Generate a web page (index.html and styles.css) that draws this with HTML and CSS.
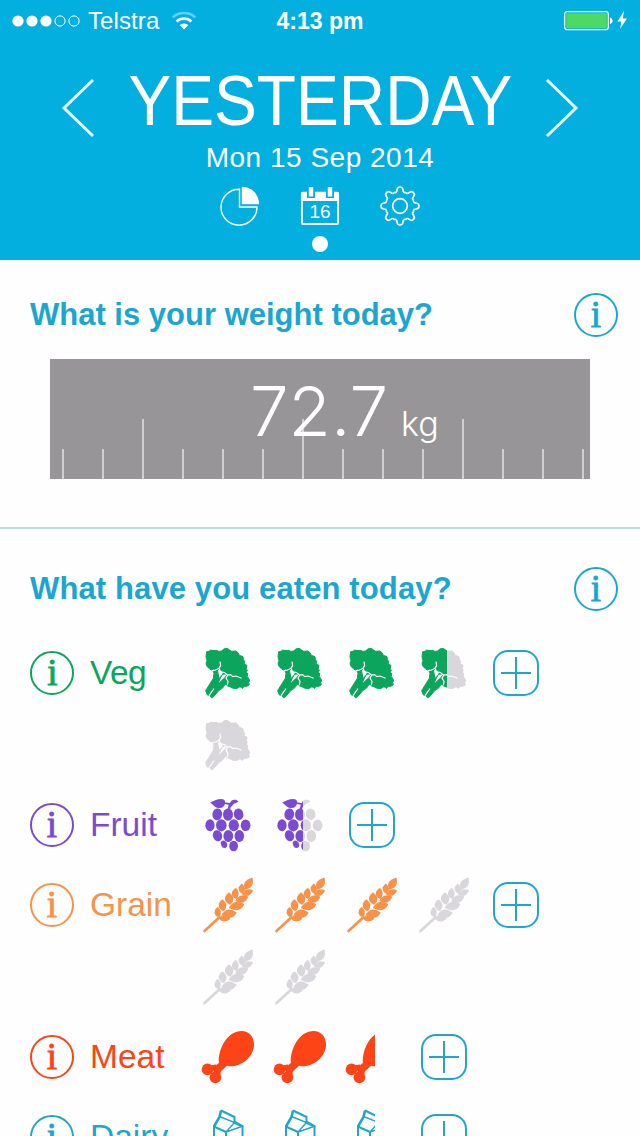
FILE: index.html
```
<!DOCTYPE html>
<html lang="en">
<head>
  <meta charset="UTF-8">
  <title>Yesterday</title>
  <link rel="stylesheet" href="styles.css">
</head>
<body>

  <!-- food icons, each on a 72x72 cell -->
  <svg class="sprite" width="0" height="0">
    <defs>
      <clipPath id="left-half"><rect x="0" y="0" width="39" height="72"/></clipPath>
      <clipPath id="right-half"><rect x="39" y="0" width="33" height="72"/></clipPath>

      <symbol id="veg" viewBox="0 0 72 72">
        <g transform="translate(-2 3) scale(.3333)">
          <path fill="currentColor" stroke="currentColor" stroke-width="3" stroke-linejoin="round" d="M48 50L50 35L57 34L62 30L69 32L80 31L86 34L96 33L101 27L112 25L117 29L125 34L138 33L144 38L148 46L159 50L160 58L164 65L162 72L171 76L169 86L172 92L168 97L173 100L172 110L179 120L176 128L178 134L171 139L162 139L158 145L150 140L140 146L126 144L120 140L113 138L107 133L103 137L97 145L87 151L70 171L64 173L60 167L52 165L47 152L70 115L72 100L68 91L60 88L52 80L48 72L51 62z"/>
          <path class="gap" d="M90 65L92 76L87 85L77 90L66 92"/>
          <path class="gap" d="M87 85L92 95L104 98L112 105L122 104L128 110L138 108L155 115"/>
          <path class="gap" d="M114 105L108 114L114 124L112 136"/>
          <path class="gap" d="M72 146L57 167"/>
          <path class="cut" d="M84 90L93 93L98 101L88 113zM98 105L110 103L104 112L86 129L94 112z"/>
        </g>
      </symbol>

      <symbol id="fruit" viewBox="0 0 72 72">
        <g fill="currentColor">
          <path d="M18 13.400c4-1.700 10.500-5.200 14.500-2.500l.8 2.500 4.700.5c.6-2.500 3.500-4 6.500-2.800l2 1.700-4.500 1.900-3.500 3.700-.8 3.500H35l1.800-6.200-3.800-.8c-1.300 3.600-3.700 4.500-7.500 3.800-3.600-.8-4.200-3.700-7.500-5.300z"/>
          <ellipse cx="25.300" cy="25.300" rx="4.900" ry="5.900" transform="rotate(8 25.300 25.300)"/>
          <ellipse cx="36" cy="25.600" rx="5" ry="6.100"/>
          <ellipse cx="46.600" cy="25.300" rx="4.800" ry="5.800" transform="rotate(-12 46.600 25.300)"/>
          <ellipse cx="18" cy="36.300" rx="4.600" ry="6"/>
          <ellipse cx="29.300" cy="36.300" rx="5.300" ry="6.100"/>
          <ellipse cx="41.800" cy="36.300" rx="5.100" ry="6"/>
          <ellipse cx="53.600" cy="36.300" rx="4.900" ry="5.800"/>
          <ellipse cx="25.500" cy="46.700" rx="4.600" ry="5.600" transform="rotate(-18 25.500 46.700)"/>
          <ellipse cx="36.300" cy="47" rx="4.900" ry="6"/>
          <ellipse cx="47.300" cy="47" rx="4.800" ry="5.900"/>
          <ellipse cx="32" cy="55.300" rx="3" ry="3.800" transform="rotate(-25 32 55.300)"/>
          <ellipse cx="41.600" cy="57" rx="4.400" ry="5.200"/>
        </g>
      </symbol>

      <symbol id="grain" viewBox="0 0 72 72">
        <g transform="translate(0 -2.700)">
          <path fill="none" stroke="currentColor" stroke-width="2.600" stroke-linecap="round" d="M12.500 64.700L27 51.500"/>
          <g fill="currentColor" stroke="currentColor" stroke-width="1.700" stroke-linejoin="round">
            <path d="M60 12.300c.8 5.500-.3 9.200-6.800 10.300-1.400-5.400 1.400-8.900 6.800-10.300z"/>
            <path d="M49.800 18.300c2.500 2.500 2.900 5.300.9 8.500-4.300-2.300-4.200-5.700-.9-8.500z"/>
            <path d="M43.800 22.600c2.900 3.400 3 6 .3 9.200-4.700-2.500-4.600-6.200-.3-9.200z"/>
            <path d="M37 27c4.300 3.500 4.700 7 1 10.500-5.500-2.500-5.600-6.800-1-10.500z"/>
            <path d="M30.300 34c4 3 4.300 6.300 1.300 10-5-2.600-5.400-6.500-1.300-10z"/>
            <path d="M25.600 41.500c2.800 2.700 3.300 5.400 1 8.900-4.200-2.300-4.200-5.700-1-8.900z"/>
            <path d="M60 24.300c-1.800 4.200-4.600 5.200-8.800 4 1.500-4.200 4.500-5.200 8.800-4z"/>
            <path d="M55.300 30.800c-2.200 4.900-6 6-11 3.600 2.700-4.600 6.300-5.500 11-3.600z"/>
            <path d="M51.300 38.100c-2.500 5.300-7.300 6.300-13.500 3.200 3.600-5.400 8.300-6.200 13.500-3.200z"/>
            <path d="M43.600 46.700c-3.300 5-7.300 5.200-12.800 1.400 3.800-5 8-5.200 12.800-1.400z"/>
            <path d="M37.300 52.200c-3.300 3-6.800 2.800-9.800-.4 3.500-3.700 7-3.400 9.800.4z"/>
          </g>
        </g>
      </symbol>

      <symbol id="meat" viewBox="0 0 72 72">
        <g fill="currentColor" transform="translate(0 -.6)">
          <path d="M26.700 41C27 25 37 10.500 49.500 10.500c7.500 0 12.500 5.500 12.500 13.500C62 36 50 46.500 37.500 45.800l-2.500-.4-7.500 7-5.500-5.500 5-4.500z"/>
          <circle cx="15.500" cy="49" r="5.800"/>
          <circle cx="23.400" cy="57" r="5.800"/>
          <path d="M16 45l8-1 5 5-1 9z"/>
        </g>
      </symbol>

      <symbol id="dairy" viewBox="0 0 72 72">
        <g fill="none" stroke="currentColor" stroke-width="2">
          <path d="M29 9.500l13.500 6.500v4.500l8 4.500V62H34V31L22 25.500V57l12 5"/>
          <path d="M29 9.500l-1.500 6.500L22 25.500" stroke-width="2.600"/>
          <path d="M27.500 15.500l15 6L34 31M34 31l16-5.500-9-4" stroke-width="1.400"/>
        </g>
      </symbol>

      <symbol id="plus" viewBox="0 0 72 72">
        <rect x="14" y="14" width="44" height="44" rx="14" fill="none" stroke="#20a5cc" stroke-width="2"/>
        <path d="M36 20v32M21 36h30" fill="none" stroke="#20a5cc" stroke-width="2"/>
      </symbol>

      <path id="tooth" d="M-5.800-13.900C-4.200-12.800-3.200-14-3-16C-2.700-18.500-1.800-19 0-19C1.800-19 2.700-18.500 3-16C3.200-14 4.200-12.800 5.800-13.900"/>
    </defs>
  </svg>

  <header class="header">
    <div class="status">
      <div class="carrier">
        <svg width="68" height="14" viewBox="0 0 68 14">
          <g fill="#fff"><circle cx="6" cy="7" r="5.600"/><circle cx="20" cy="7" r="5.600"/><circle cx="34" cy="7" r="5.600"/></g>
          <g fill="none" stroke="#fff"><circle cx="48" cy="7" r="5.100"/><circle cx="62" cy="7" r="5.100"/></g>
        </svg>
        <span class="network">Telstra</span>
        <svg width="24" height="18" viewBox="0 0 24 18">
          <path d="M.8 5.300a16.500 16.500 0 0 1 22.400 0" fill="none" stroke="#5fd0f7" stroke-width="2.600"/>
          <path d="M4.500 9.500a11 11 0 0 1 15 0" fill="none" stroke="#fff" stroke-width="2.600"/>
          <path d="M12 17.500l-4.300-4.400a6.300 6.300 0 0 1 8.600 0z" fill="#fff"/>
        </svg>
      </div>
      <div class="time">4:13 pm</div>
      <div class="battery">
        <svg width="66" height="22" viewBox="0 0 66 22">
          <rect x=".7" y="1.700" width="43.600" height="18" rx="2.500" fill="none" stroke="#fff" stroke-width="1.200"/>
          <rect x="2.200" y="3.200" width="40.600" height="15" rx="1" fill="#4cd964"/>
          <path d="M46 7.500c3.500.5 3.500 6 0 6.500z" fill="#fff"/>
          <path d="M60 1l-6.500 10.500h4l-1.500 7.500 7-10.500h-4.200z" fill="#fff"/>
        </svg>
      </div>
    </div>

    <div class="day">
      <svg class="arrow" width="34" height="60" viewBox="0 0 34 60"><path d="M32 2L3 30l29 28"/></svg>
      <h1 class="day-name">YESTERDAY</h1>
      <svg class="arrow" width="34" height="60" viewBox="0 0 34 60"><path d="M2 2l29 28L2 58"/></svg>
    </div>
    <div class="date">Mon 15 Sep 2014</div>

    <nav class="tabs">
      <svg width="40" height="40" viewBox="0 0 40 40">
        <path d="M19.500 3.200A18 18 0 1 0 37 21H19.500z" fill="none" stroke="#fff" stroke-width="1.400"/>
        <path d="M21.800 0.800a17 17 0 0 1 17.200 17.400H21.800z" fill="#fff"/>
      </svg>
      <svg width="40" height="40" viewBox="0 0 40 40">
        <rect x="1.900" y="6.700" width="36.200" height="31.300" rx="1" fill="none" stroke="#fff" stroke-width="1.900"/>
        <path d="M1.500 6h37v9h-37z" fill="#fff"/>
        <path d="M7 4h8v8H7zM26 4h8v8h-8z" fill="#02afdf"/>
        <path d="M8.800 1h4.400v9.500H8.800zM27.800 1h4.400v9.500h-4.400z" fill="#fff"/>
        <text x="20" y="32" class="tab-day">16</text>
      </svg>
      <svg width="40" height="40" viewBox="0 0 40 40">
        <g fill="none" stroke="#fff" stroke-width="1.700" transform="translate(20 20)">
          <circle r="7.300"/>
          <use href="#tooth"/>
          <use href="#tooth" transform="rotate(45)"/>
          <use href="#tooth" transform="rotate(90)"/>
          <use href="#tooth" transform="rotate(135)"/>
          <use href="#tooth" transform="rotate(180)"/>
          <use href="#tooth" transform="rotate(225)"/>
          <use href="#tooth" transform="rotate(270)"/>
          <use href="#tooth" transform="rotate(315)"/>
        </g>
      </svg>
    </nav>
    <div class="dot"></div>
  </header>

  <section class="weight">
    <div class="question">
      <h2>What is your weight today?</h2>
      <span class="info">i</span>
    </div>
    <div class="scale">
      <div class="ticks">
        <i></i><i></i><i class="tall"></i><i></i><i></i><i></i><i class="tall"></i><i></i><i></i><i></i><i class="tall"></i><i></i><i></i><i></i>
      </div>
      <div class="reading"><span class="number">72.7</span><span class="unit">kg</span></div>
    </div>
  </section>

  <section class="eaten">
    <div class="question">
      <h2>What have you eaten today?</h2>
      <span class="info">i</span>
    </div>

    <div class="food veg">
      <div class="label"><span class="info">i</span>Veg</div>
      <div class="serves">
        <svg><use href="#veg"/></svg>
        <svg><use href="#veg"/></svg>
        <svg><use href="#veg"/></svg>
        <svg><g clip-path="url(#left-half)"><use href="#veg"/></g><g class="empty" clip-path="url(#right-half)"><use href="#veg"/></g></svg>
        <svg><use href="#plus"/></svg>
        <svg class="empty"><use href="#veg"/></svg>
      </div>
    </div>

    <div class="food fruit">
      <div class="label"><span class="info">i</span>Fruit</div>
      <div class="serves">
        <svg><use href="#fruit"/></svg>
        <svg><g clip-path="url(#left-half)"><use href="#fruit"/></g><g class="empty" clip-path="url(#right-half)"><use href="#fruit"/></g></svg>
        <svg><use href="#plus"/></svg>
      </div>
    </div>

    <div class="food grain">
      <div class="label"><span class="info">i</span>Grain</div>
      <div class="serves">
        <svg><use href="#grain"/></svg>
        <svg><use href="#grain"/></svg>
        <svg><use href="#grain"/></svg>
        <svg class="empty"><use href="#grain"/></svg>
        <svg><use href="#plus"/></svg>
        <svg class="empty"><use href="#grain"/></svg>
        <svg class="empty"><use href="#grain"/></svg>
      </div>
    </div>

    <div class="food meat">
      <div class="label"><span class="info">i</span>Meat</div>
      <div class="serves">
        <svg><use href="#meat"/></svg>
        <svg><use href="#meat"/></svg>
        <svg><g clip-path="url(#left-half)"><use href="#meat"/></g></svg>
        <svg><use href="#plus"/></svg>
      </div>
    </div>

    <div class="food dairy">
      <div class="label"><span class="info">i</span>Dairy</div>
      <div class="serves">
        <svg><use href="#dairy"/></svg>
        <svg><use href="#dairy"/></svg>
        <svg><g clip-path="url(#left-half)"><use href="#dairy"/></g></svg>
        <svg><use href="#plus"/></svg>
      </div>
    </div>
  </section>

</body>
</html>
```
FILE: styles.css
```
* {
  box-sizing: border-box;
}

html, body {
  height: 1136px;
  overflow: hidden;
}

body {
  margin: 0;
  width: 640px;
  background-color: #fefefe;
  font-family: "Liberation Sans", Arial, sans-serif;
}

svg {
  display: block;
}

.sprite {
  position: absolute;
}

/* header */

.header {
  height: 260px;
  background-color: #02afdf;
  color: white;
  display: flex;
  flex-direction: column;
  align-items: center;
}

.status {
  width: 100%;
  height: 42px;
  padding: 0 10px 0 12px;
  display: grid;
  grid-template-columns: 1fr auto 1fr;
  align-items: center;
  font-size: 23px;
}

.carrier {
  display: flex;
  align-items: center;
}

.network {
  margin: 0 13px 0 8px;
  font-size: 24px;
  letter-spacing: 0.1px;
}

.time {
  font-weight: bold;
  font-size: 23px;
  margin-right: 2px;
}

.battery {
  display: flex;
  justify-content: flex-end;
}

.day {
  width: 518px;
  height: 98px;
  display: flex;
  align-items: center;
  justify-content: space-between;
  padding-top: 34px;
}

.arrow {
  fill: none;
  stroke: #e6fdff;
  stroke-width: 3;
}

.day-name {
  margin: -14px -40px 0;
  font-size: 70px;
  line-height: 70px;
  font-weight: normal;
  transform: scaleX(0.917);
}

.date {
  font-size: 28px;
  line-height: 32px;
  letter-spacing: 0.5px;
  margin-top: 2px;
}

.tabs {
  display: flex;
  gap: 40px;
  margin-top: 12px;
}

.tab-day {
  fill: white;
  font-size: 19px;
  text-anchor: middle;
}

.dot {
  width: 16px;
  height: 16px;
  margin-top: 10px;
  border-radius: 50%;
  background-color: white;
}

/* questions */

.weight {
  height: 269px;
  padding-top: 33px;
  border-bottom: 2px solid #b3dfdc;
}

.eaten {
  padding-top: 38px;
}

.question {
  display: flex;
  align-items: center;
  justify-content: space-between;
  padding: 0 22px 0 30px;
  color: #1ba6cf;
}

h2 {
  margin: 0;
  font-size: 31px;
  line-height: 44px;
}

.eaten h2 {
  letter-spacing: 0.12px;
}

.info {
  width: 44px;
  height: 44px;
  flex: none;
  border: 2px solid currentColor;
  border-radius: 50%;
  font-family: "Liberation Serif", serif;
  font-weight: normal;
  font-size: 37px;
  line-height: 40px;
  text-align: center;
  -webkit-text-stroke: 0.9px currentColor;
}

/* weight scale */

.scale {
  position: relative;
  width: 540px;
  height: 120px;
  margin: 22px auto 0;
  background-color: #979598;
}

.ticks {
  height: 120px;
  padding-left: 12px;
  display: flex;
  align-items: flex-end;
  gap: 38px;
}

.ticks i {
  width: 2px;
  height: 30px;
  background-color: #cfced1;
}

.ticks .tall {
  height: 60px;
}

.reading {
  position: absolute;
  top: 10px;
  left: 200px;
  color: white;
  font-family: Inter, sans-serif;
  font-weight: 300;
  line-height: 84px;
  white-space: nowrap;
}

.number {
  font-size: 69px;
}

.unit {
  margin-left: 13px;
  font-size: 34px;
}

/* food rows */

.eaten .question {
  margin-bottom: 22px;
}

.food {
  display: flex;
  padding: 4px 0 4px 30px;
}

.label {
  width: 162px;
  height: 72px;
  display: flex;
  align-items: center;
  gap: 16px;
  font-size: 33.5px;
}

.serves {
  width: 360px;
  display: flex;
  flex-wrap: wrap;
}

.serves svg {
  width: 72px;
  height: 72px;
}

.gap {
  fill: none;
  stroke: #fefefe;
  stroke-width: 3.5;
}

.cut {
  fill: #fefefe;
}

.veg { color: #0ba65c; }
.veg .label { letter-spacing: -0.6px; }
.fruit { color: #7a4bd0; }
.grain { color: #f7924a; }
.meat { color: #fc4416; }
.dairy { color: #20a5cc; }
.empty { color: #d9d7db; }
```
